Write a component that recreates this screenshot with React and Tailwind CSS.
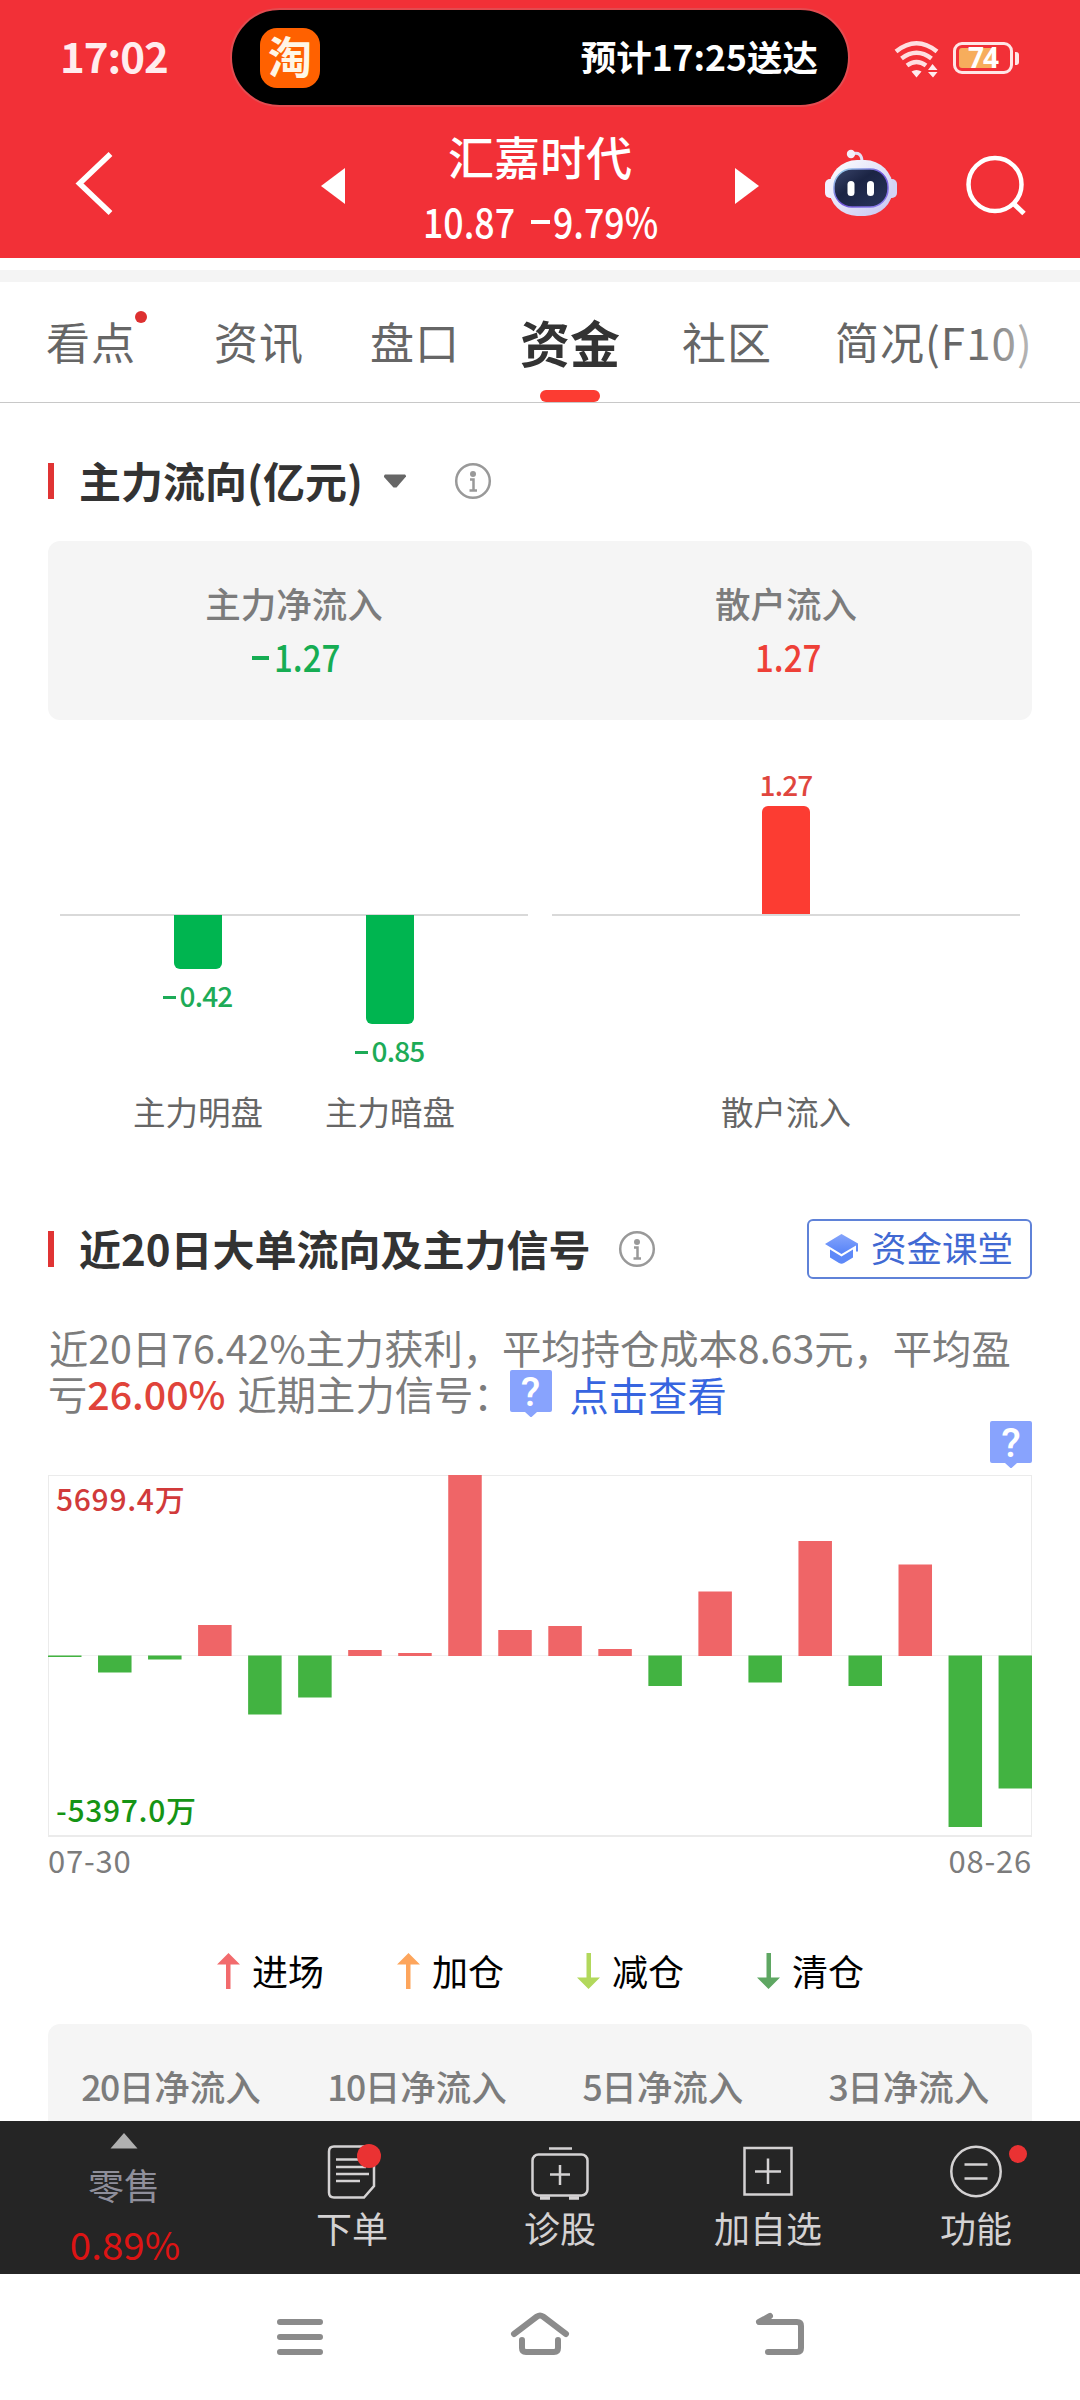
import clsx from 'clsx';

export default function FundsPage() {
    return (<div className="w-[1080px] h-[2400px] overflow-hidden bg-white flex flex-col whitespace-nowrap font-['Noto_Sans_CJK_SC',sans-serif]">
      <header className="h-[258px] shrink-0 bg-[#f23037] text-white">
        <StatusBar />
        <div className="h-[142px] flex items-start">
          <svg className="ml-[74px] mt-[32px]" width="42" height="72" fill="none" stroke="white" strokeWidth="5.5">
            <path d="M36.5 6 5.5 35.5 36.5 65"/>
          </svg>
          <svg className="ml-[205px] mt-[52px]" width="24" height="36" fill="white"><path d="M24 0v36L0 18z"/></svg>
          <div className="w-[390px] pt-[9px] flex flex-col items-center">
            <h1 className="text-[46px] leading-[60px] font-medium">汇嘉时代</h1>
            <div className="mt-[5px] w-[234px] flex text-[41px] leading-[60px] font-medium">
              <span className="w-[108px] shrink-0 origin-left scale-x-[0.87]">10.87</span>
              <i className="w-[19px] h-[4px] shrink-0 bg-white mt-[30px] mr-[3px]"/>
              <span className="origin-left scale-x-[0.87]">9.79%</span>
            </div>
          </div>
          <svg className="mt-[52px]" width="24" height="36" fill="white"><path d="M0 0v36l24-18z"/></svg>
          <Robot />
          <svg className="ml-[63px] mt-[36px]" width="66" height="66" fill="none" stroke="white" strokeWidth="4.5">
            <circle cx="32" cy="32.5" r="26.5"/>
            <path d="M50.5 51.5 61 61.5" strokeWidth="5"/>
          </svg>
        </div>
      </header>

      <div className="h-[12px] shrink-0"/>
      <div className="h-[12px] shrink-0 bg-[#f4f4f4]"/>
      <nav className="relative h-[121px] shrink-0 flex items-center border-b border-[#c8c8c8] text-[#666]">
        {tabs.map(tab => (<div key={tab.name} className={clsx('relative h-[120px] leading-[118px]', tab.space, tab.active ? 'text-[50px] text-[#333] font-bold' : 'text-[44px] tracking-[1px]')}>
            {tab.name}
            {tab.dot && <i className="absolute left-[89px] top-[29px] w-[12px] h-[12px] rounded-full bg-[#dd3030]"/>}
            {tab.active && <i className="absolute left-[20px] bottom-0 w-[60px] h-[12px] rounded-full bg-[#fc3c32]"/>}
          </div>))}
        <i className="absolute right-0 top-0 w-[108px] h-[118px] bg-gradient-to-r from-transparent to-white"/>
      </nav>

      <section className="px-[48px]">
        <div className="h-[138px] pt-[18px] flex items-center">
          <i className="w-[6px] h-[36px] bg-[#e03434]"/>
          <h2 className="ml-[25px] -mt-[2px] text-[42px] leading-[60px] font-bold text-[#333]">主力流向(亿元)</h2>
          <svg className="ml-[20px]" width="24" height="15" fill="#666"><path d="M1 1.500 2 .5h20l1 1v1L13.500 13.500h-3L1 3z"/></svg>
          <InfoIcon className="ml-[47px]"/>
        </div>
        <div className="h-[179px] rounded-[12px] bg-[#f5f5f5] flex text-center">
          {flows.map(flow => (<div key={flow.name} className="flex-1 pt-[37px]">
              <div className="text-[35.5px] leading-[50px] font-medium text-[#7c7c7c]">{flow.name}</div>
              <div className={clsx('h-[60px] flex items-center justify-center text-[38px] leading-[60px] font-medium', flow.down ? 'text-[#16ad53]' : 'text-[#ee4037]')}>
                {flow.down && <i className="w-[17px] h-[4px] bg-[#16ad53] -mt-[1px] mr-[5px]"/>}
                <span className="w-[63px] origin-left scale-x-[0.87] -mt-[5px] text-left">1.27</span>
              </div>
            </div>))}
        </div>
      </section>

      <section className="h-[430px] shrink-0 px-[60px] flex gap-[24px]">
        <div className="relative w-[468px] flex justify-center gap-[12px]">
          <i className="absolute inset-x-0 top-[194px] h-[2px] bg-[#d9d9d9]"/>
          {mainBars.map(bar => <FlowBar key={bar.name} {...bar}/>)}
        </div>
        <div className="relative w-[468px] flex justify-center">
          <i className="absolute inset-x-0 top-[194px] h-[2px] bg-[#d9d9d9]"/>
          <FlowBar name="散户流入" value="1.27" height={108}/>
        </div>
      </section>

      <section className="px-[48px] pt-[69px]">
        <div className="h-[60px] flex items-center">
          <i className="w-[6px] h-[36px] bg-[#e03434]"/>
          <h2 className="ml-[25px] -mt-[2px] text-[42px] leading-[60px] font-bold text-[#333]">近20日大单流向及主力信号</h2>
          <InfoIcon className="ml-[27px]"/>
          <div className="ml-auto w-[225px] h-[60px] rounded-[6px] border-2 border-[#5f82d8] flex items-center pl-[16px] text-[#4169d3]">
            <svg width="34" height="32">
              <defs>
                <linearGradient id="cap" x1="0" y1="0" x2="0" y2="1">
                  <stop stopColor="#86a5fb"/>
                  <stop offset="1" stopColor="#5683f8"/>
                </linearGradient>
              </defs>
              <path fill="url(#cap)" d="M16.500 1 33 10.500v8h-2v-6L16.500 21 0 11z"/>
              <path fill="#5e89f8" d="M5 16.500 16.500 23.500 28 16.500v8L19 30q-2.500 1.500-5 0L5 24.500z"/>
            </svg>
            <span className="ml-[12px] -mt-[5px] text-[35.5px]">资金课堂</span>
          </div>
        </div>
        <div className="mt-[45px] text-[39.3px] leading-[46px] text-[#7c7c7c]">
          <div className="pl-px">近20日76.42%主力获利，平均持仓成本8.63元，平均盈</div>
          <div className="flex">
            亏<span className="text-[#e0433a] font-medium">26.00%</span>
            <span className="ml-[12px] w-[272px]">近期主力信号：</span>
            <HelpTag />
            <span className="ml-[18px] mt-[1px] text-[#3765e0]">点击查看</span>
          </div>
        </div>
        <div className="mt-[4px] h-[54px] flex justify-end"><HelpTag /></div>
        <DailyChart />
        <div className="h-[52px] flex justify-between text-[31px] leading-[45px] text-[#7c7c7c]">
          <span className="tracking-[0.8px]">07-30</span>
          <span className="tracking-[0.8px]">08-26</span>
        </div>
      </section>

      <div className="mt-[56px] h-[50px] shrink-0 pl-[216px] flex text-[36px] leading-[50px] text-black">
        {legend.map(item => (<div key={item.name} className="w-[180px] flex">
            <svg className={clsx('mt-[8px]', item.down && 'rotate-180')} width="25" height="36" fill={item.color}>
              <path d="M12.500 0 24 11.500h-9.500V36h-4.500V11.500H1z"/>
            </svg>
            <span className="ml-[11px]">{item.name}</span>
          </div>))}
      </div>

      <div className="mx-[48px] mt-[29px] h-[97px] shrink-0 rounded-t-[12px] bg-[#f5f5f5] flex text-center text-[35.5px] leading-[123px] font-medium text-[#7c7c7c]">
        {periods.map(days => (<div key={days} className="flex-1 h-[97px] overflow-hidden"><span className="tracking-[-1.5px]">{days}</span>日净流入</div>))}
      </div>

      <TabBar />
      <SystemNav />
    </div>);
}

function StatusBar() {
    return (<div className="h-[116px] flex items-start">
      <div className="w-[170px] ml-[60px] pt-[25px] text-[42px] leading-[60px] font-bold text-[#ffecee] tracking-[-1px]">17:02</div>
      <div className="mt-[8px] w-[620px] h-[99px] rounded-full border-2 border-[#e34b50] bg-black flex items-center pl-[28px] pr-[30px]">
        <div className="w-[60px] h-[60px] rounded-[17px] bg-[#ff6100] text-center text-[44px] leading-[55px] font-bold text-[#fff6e6]">淘</div>
        <div className="ml-auto -mt-[4px] text-[35.5px] font-bold">预计17:25送达</div>
      </div>
      <svg className="ml-[43px] mt-[38px]" width="48" height="42" fill="none" stroke="#ffdfe1" strokeWidth="4.5">
        <path d="M3 13.500Q23.500-3 44 13.500M8.500 20.500Q23.500 9 38.500 20.500M14 27.500Q23.500 20.500 33 27.500"/>
        <path fill="#ffecee" stroke="none" d="M18.500 33.500Q23.500 30.500 28.500 33.500L23.500 39.500zM35 32 39.500 26 44.500 32zM35 34h9.500L40 39.500z"/>
      </svg>
      <div className="relative ml-[12px] mt-[42px] w-[60px] h-[32px] rounded-[9px] border-[3px] border-[#ffe6e6] p-[3px]">
        <i className="block w-[36px] h-full rounded-l-[3px] bg-[#f7ad5c]"/>
        <i className="absolute -right-[9px] top-[7px] w-[4px] h-[13px] rounded-r-[3px] bg-[#ffe6e6]"/>
        <b className="absolute inset-x-0 -top-[2px] text-center text-[28px] leading-[28px] text-white font-['Open_Sans',sans-serif] tracking-[-1px]">74</b>
      </div>
    </div>);
}

function Robot() {
    return (<svg className="ml-[65px] mt-[32px]" width="76" height="72">
      <defs>
        <linearGradient id="shell" x1="0" y1="0" x2="1" y2="1">
          <stop stopColor="#ffffff"/>
          <stop offset="1" stopColor="#c5c5f2"/>
        </linearGradient>
        <linearGradient id="visor" x1="0" y1="0" x2="1" y2="1">
          <stop stopColor="#3b466c"/>
          <stop offset=".4" stopColor="#1b2444"/>
          <stop offset="1" stopColor="#29345c"/>
        </linearGradient>
        <linearGradient id="rim" x1="0" y1="0" x2="1" y2="1">
          <stop stopColor="#a0e4ed"/>
          <stop offset=".5" stopColor="#6f50d8"/>
          <stop offset="1" stopColor="#8d83ee"/>
        </linearGradient>
      </defs>
      <path d="M28 6q10-3 10 8" fill="none" stroke="#e4dff5" strokeWidth="3"/>
      <circle cx="27" cy="6" r="4.200" fill="#f4effb"/>
      <rect x="1" y="31" width="12" height="19" rx="5" fill="#f2f0ff"/>
      <rect x="62" y="31" width="11" height="19" rx="5" fill="#d3d3f6"/>
      <rect x="5" y="12" width="64" height="56" rx="28" fill="url(#shell)"/>
      <rect x="10" y="21" width="54" height="38" rx="18" fill="url(#visor)" stroke="url(#rim)" strokeWidth="1.500"/>
      <rect x="23.500" y="33" width="7" height="15" rx="3.500" fill="white"/>
      <rect x="43" y="33" width="7" height="15" rx="3.500" fill="white"/>
    </svg>);
}

function InfoIcon({ className }) {
    return (<svg className={className} width="38" height="38" fill="none" stroke="#999" strokeWidth="2.500">
      <circle cx="19" cy="19" r="16.800"/>
      <circle cx="19" cy="12" r="3" fill="#999" stroke="none"/>
      <path d="M16 17.500h3.500V28M15.500 28.500h7.500"/>
    </svg>);
}

function HelpTag() {
    return (<div className="relative w-[42px] h-[47px] shrink-0">
      <svg className="absolute inset-0" width="42" height="47" fill="#88a3fd">
        <path d="M2 0h38q2 0 2 2v38q0 2-2 2H27l-6 5.500L15 42H2q-2 0-2-2V2q0-2 2-2z"/>
      </svg>
      <span className="absolute inset-x-0 top-0 text-center text-[40px] leading-[45px] font-medium text-white font-['Roboto',sans-serif]">?</span>
    </div>);
}

function FlowBar({ name, value, height, down }) {
    const label = (<div className={clsx('h-[30px] flex items-center justify-center text-[28px] leading-[30px] font-medium', down ? 'text-[#1dab57]' : 'text-[#e0463e]')}>
        {down && <i className="w-[13px] h-[3px] bg-[#1dab57] mr-[3px] mt-[2px]"/>}
        <span className="-mt-[3px] tracking-[-0.8px]">{value}</span>
      </div>);
    return (<div className={clsx('relative flex flex-col', down ? 'w-[180px]' : 'w-full')}>
      <div className="h-[194px] flex flex-col items-center justify-end">
        {!down && label}
        {!down && <i className="mt-[6px] w-[48px] shrink-0 rounded-t-[6px] bg-[#fc3c32]" style={{ height }}/>}
      </div>
      <div className="h-[177px] pt-[1px] flex flex-col items-center">
        {down && <i className="w-[48px] shrink-0 rounded-b-[6px] bg-[#00b550]" style={{ height }}/>}
        {down && <div className="mt-[12px]">{label}</div>}
      </div>
      <div className="text-center text-[32.5px] leading-[40px] text-[#666]">{name}</div>
    </div>);
}

function DailyChart() {
    return (<div className="relative h-[362px] border-x border-t border-b-2 border-[#ebebeb]">
      <svg className="absolute -left-px -top-px" width="984" height="362">
        <path d="M0 180.500h984" stroke="#f1f1f1"/>
        {daily.map((v, i) => (<rect key={i} x={i * 50.030} y={v > 0 ? 181 - v : 180.500} width="33.500" height={Math.abs(v)} fill={v > 0 ? '#ef6567' : '#42b341'}/>))}
      </svg>
      <div className="absolute left-[7px] top-0 text-[30px] leading-[44px] font-medium text-[#d13a3a] tracking-[0.7px]">5699.4万</div>
      <div className="absolute left-[7px] bottom-[4px] text-[30px] leading-[44px] font-medium text-[#159415] tracking-[0.7px]">-5397.0万</div>
    </div>);
}

function TabBar() {
    return (<footer className="h-[153px] shrink-0 bg-[#252525] flex text-center text-[36px] leading-[50px] text-[#d4d2d3]">
      <div className="w-[248px] flex flex-col items-center pt-[12px]">
        <svg width="28" height="16" fill="#b0b0b0"><path d="M14 0l13.500 15.500H.5z"/></svg>
        <div className="mt-[10px] text-[#8f8f9b]">零售</div>
        <div className="mt-[9px] ml-[2px] text-[38.5px] text-[#dd1414]">0.89%</div>
      </div>
      {actions.map(action => (<div key={action.name} className="w-[208px] flex flex-col items-center pt-[18px]">
          <div className="relative h-[66px]">
            {action.icon}
            {action.dot && <i className="absolute left-[63px] top-[6px] w-[18px] h-[18px] rounded-full bg-[#ea3233]"/>}
          </div>
          <div className="-mt-[3px]">{action.name}</div>
        </div>))}
    </footer>);
}

function SystemNav() {
    return (<div className="h-[126px] shrink-0 flex items-center justify-center">
      <svg width="540" height="60" fill="none" stroke="#8b8b8b" strokeWidth="6" strokeLinecap="round" strokeLinejoin="round">
        <path d="M10 15h40M10 30h40M10 45h40"/>
        <path d="M244 27 267 9.500q3-2 6 0l23 17.500M252 33v8q0 4 4 4h28q4 0 4-4v-8"/>
        <path d="M500 9l-11 6h38q4 0 4 4v22q0 4-4 4h-29"/>
      </svg>
    </div>);
}

const tabs = [
    { name: '看点', space: 'ml-[46px]', dot: true },
    { name: '资讯', space: 'ml-[78px]' },
    { name: '盘口', space: 'ml-[66px]' },
    { name: '资金', space: 'ml-[60px]', active: true },
    { name: '社区', space: 'ml-[62px]' },
    { name: '简况(F10)', space: 'ml-[63px]' }
];
const flows = [
    { name: '主力净流入', down: true },
    { name: '散户流入' }
];
const mainBars = [
    { name: '主力明盘', value: '0.42', height: 54, down: true },
    { name: '主力暗盘', value: '0.85', height: 109, down: true }
];
// bar heights in px, newest day last
const daily = [-1.5, -17, -4, 31, -59, -42, 6, 3, 181, 26, 30, 7, -30.5, 64.5, -27, 115, -30.5, 91.5, -171.5, -133];
const legend = [
    { name: '进场', color: '#f26b6d' },
    { name: '加仓', color: '#fda55c' },
    { name: '减仓', color: '#b2d85c', down: true },
    { name: '清仓', color: '#5fa763', down: true }
];
const periods = ['20', '10', '5', '3'];
const actions = [
    {
        name: '下单',
        icon: <svg width="60" height="66" fill="none" stroke="#d4d2d3" strokeWidth="2.500">
          <path d="M12 7.500h36q4 0 4 4V47L42 58.500H12q-5 0-5-5V12.500q0-5 5-5z"/>
          <path d="M14 20.500h26M14 28h30M14 35h33M14 42h24"/>
          <circle cx="47" cy="17" r="12" fill="#ea3233" stroke="none"/>
        </svg>
    },
    {
        name: '诊股',
        icon: <svg width="60" height="66" fill="none" stroke="#d4d2d3" strokeWidth="2.500">
          <rect x="2.500" y="15.500" width="55" height="41" rx="6"/>
          <path d="M19 9.500h23M30 26v20M20 35.500h20"/>
          <path d="M10 59h10M39 59h10" strokeWidth="3.500"/>
        </svg>
    },
    {
        name: '加自选',
        icon: <svg width="60" height="66" fill="none" stroke="#d4d2d3" strokeWidth="2.500">
          <rect x="6.500" y="9" width="47" height="46.500"/>
          <path d="M30 19.500V45M17 32.500h26"/>
        </svg>
    },
    {
        name: '功能',
        dot: true,
        icon: <svg width="60" height="66" fill="none" stroke="#d4d2d3" strokeWidth="2.500">
          <circle cx="30" cy="32.500" r="24.700"/>
          <path d="M18.500 25.500h23M18.500 39.500h23"/>
        </svg>
    }
];
